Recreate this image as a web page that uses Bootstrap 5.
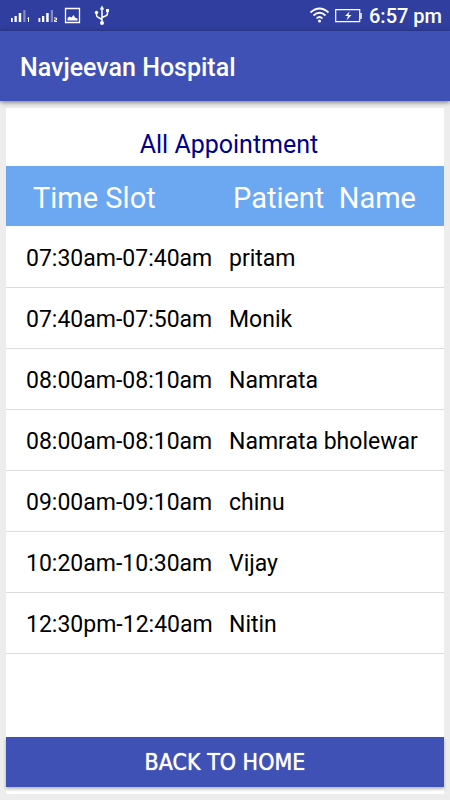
<!DOCTYPE html>
<html lang="en">
<head>
<meta charset="utf-8">
<meta name="viewport" content="width=device-width, initial-scale=1">
<title>Navjeevan Hospital</title>
<link href="https://cdn.jsdelivr.net/npm/bootstrap@5.3.0/dist/css/bootstrap.min.css" rel="stylesheet">
<style>
body { font-family: Roboto, sans-serif; background: #ededed; color: #000; }
.status-strip { background: #303f9f; height: 31px; padding: 0 8px 0 10px; }
.status-end { gap: 6px; }
.clock { font-size: 20px; font-weight: 500; line-height: 31px; padding-top: 2px; }
.app-bar { background: #3f51b5; height: 70px; padding: 3px 20px 0; box-shadow: 0 1px 5px rgba(0,0,0,.55); }
.app-title { font-size: 25px; font-weight: 500; line-height: 32px; }
.sheet { margin: 7px 6px 6px; }
.page-title { color: #00008b; font-size: 25px; line-height: 32px; padding: 21px 0 5px 8px; }
.slots { table-layout: fixed; }
.slots th { background: #6ca8f1; color: #fff; font-size: 29px; font-weight: 400; height: 60px; padding: 5px 0 0 10px; white-space: pre; }
.slots th:first-child { padding-left: 27px; }
.slots td { font-size: 23px; height: 61px; padding: 5px 0 0 6px; border-bottom: 1px solid #dcdcdc; }
.slots td:first-child { padding-left: 20px; }
.slot-col { width: 217px; }
.home-btn { background: #3f51b5; color: #fff; height: 50px; padding: 0; margin-bottom: 7px; font-family: "DejaVu Sans Condensed", "DejaVu Sans", sans-serif; font-size: 23px; line-height: 48px; text-shadow: 0 0 1px #fff; box-shadow: 0 2px 3px rgba(0,0,0,.3); }
.home-btn:hover { background: #3949a5; color: #fff; }
</style>
<script src="https://cdn.jsdelivr.net/npm/bootstrap@5.3.0/dist/js/bootstrap.bundle.min.js"></script>
</head>
<body class="d-flex flex-column min-vh-100">
<header>
  <div class="status-strip d-flex align-items-center justify-content-between text-white">
    <svg width="102" height="31" viewBox="10 0 102 31" fill="#fff" aria-hidden="true">
      <g id="signal">
        <path d="M11 18h1.800v4H11zM14.500 16h2.300v6h-2.300zM18.700 13h2.500v9h-2.500z"/>
        <path d="M23.300 10h2.200v12h-2.200z" opacity=".4"/>
      </g>
      <use href="#signal" x="27.500"/>
      <path d="M27.500 18.500l1-1V22" fill="none" stroke="#fff"/>
      <path d="M54 18h2.500v2H54.500v1.500H57" fill="none" stroke="#fff"/>
      <path d="M65.500 8.500h14v14h-14z" fill="none" stroke="#fff" stroke-width="1.300"/>
      <path d="M67.500 20.500v-2.500l2-1.500 2 1 2-2.500 2 3 2 .5v2z"/>
      <path d="M102 9v14M96.500 13v2q0 2 2 2.500l3.500 2M107.500 11v2q0 2.500-2 3l-3.500 1.500" fill="none" stroke="#fff" stroke-width="1.500"/>
      <path d="M99.800 9.500l2.200-4 2.200 4z"/><circle cx="102" cy="23" r="2"/><circle cx="96.500" cy="12.500" r="1.700"/><path d="M106 9h3v3h-3z"/>
    </svg>
    <div class="status-end d-flex align-items-center">
      <svg width="54" height="31" viewBox="309 0 54 31" fill="none" stroke="#fff" aria-hidden="true">
        <path d="M310.500 12.500q9-8 18 0M313.500 15.500q6-5.500 12 0M316.500 18.500q3-3 6 0" stroke-width="1.700"/>
        <circle cx="319.500" cy="21" r="1.500" fill="#fff" stroke="none"/>
        <path d="M335.700 9.700h24v12h-24z" stroke-width="1.200"/><path d="M361 13v6" stroke-width="1.500"/>
        <path d="M349.500 11.500l-4.500 4.500h3l-1.500 4.500 5-5.500h-3z" fill="#fff" stroke="none"/>
      </svg>
      <span class="clock">6:57 pm</span>
    </div>
  </div>
  <div class="app-bar navbar">
    <h1 class="app-title text-white m-0">Navjeevan Hospital</h1>
  </div>
</header>
<main class="sheet bg-white d-flex flex-column flex-grow-1">
  <h2 class="page-title text-center fw-normal m-0">All Appointment</h2>
  <table class="slots w-100">
    <colgroup><col class="slot-col"><col></colgroup>
    <thead><tr><th scope="col">Time Slot</th><th scope="col">Patient  Name</th></tr></thead>
    <tbody>
      <tr><td>07:30am-07:40am</td><td>pritam</td></tr>
      <tr><td>07:40am-07:50am</td><td>Monik</td></tr>
      <tr><td>08:00am-08:10am</td><td>Namrata</td></tr>
      <tr><td>08:00am-08:10am</td><td>Namrata bholewar</td></tr>
      <tr><td>09:00am-09:10am</td><td>chinu</td></tr>
      <tr><td>10:20am-10:30am</td><td>Vijay</td></tr>
      <tr><td>12:30pm-12:40am</td><td>Nitin</td></tr>
    </tbody>
  </table>
  <button type="button" class="home-btn btn rounded-0 border-0 w-100 mt-auto">BACK TO HOME</button>
</main>
</body>
</html>
